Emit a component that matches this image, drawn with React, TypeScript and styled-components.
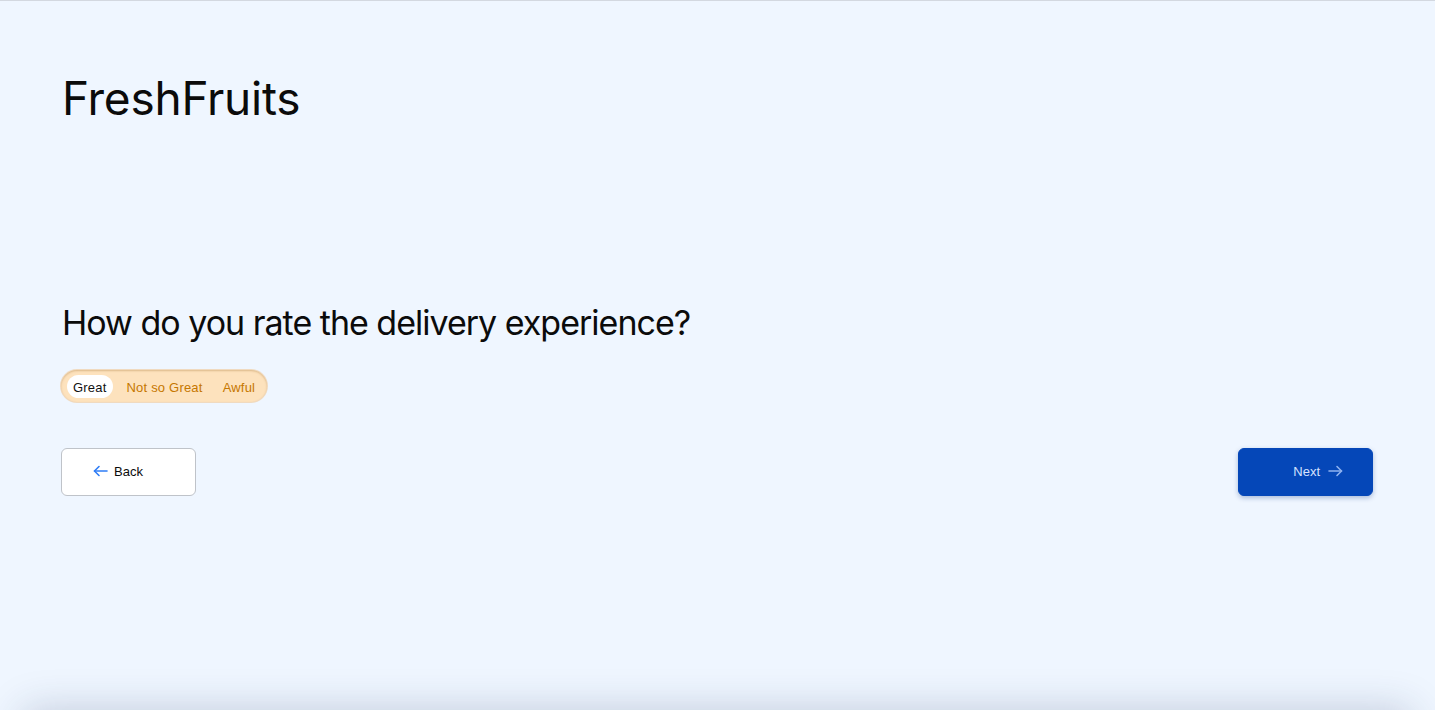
import React, { useState } from "react";
import styled, { createGlobalStyle } from "styled-components";

const Global = createGlobalStyle`
  html, body { margin: 0; padding: 0; background: #eff6ff; overflow: hidden; }
  * { box-sizing: border-box; }
`;

const Page = styled.div`
  min-height: 710px;
  border-top: 1px solid #d3d8e0;
  background: #eff6ff;
  padding: 0 62px;
  display: flex;
  flex-direction: column;
`;

const Brand = styled.h1`
  margin: 68px 0 0;
  font-family: Inter, "Noto Sans", sans-serif;
  font-weight: 400;
  font-size: 46px;
  line-height: 58px;
  letter-spacing: -0.25px;
  color: #0b0b0b;
`;

const Question = styled.h2`
  margin: 174px 0 0;
  font-family: Inter, "Noto Sans", sans-serif;
  font-weight: 400;
  font-size: 34px;
  line-height: 44px;
  letter-spacing: -1px;
  color: #0b0b0b;
`;

const Segmented = styled.div`
  margin: 25px 0 0 -1px;
  align-self: flex-start;
  display: flex;
  align-items: center;
  gap: 8px;
  height: 32px;
  padding: 1px 6px 0 6px;
  border-radius: 16px;
  background: #fde2bd;
  box-shadow: inset 0 1px 2px rgba(160, 110, 40, 0.35), 0 0 0 1px rgba(240, 200, 150, 0.6);
`;

const Segment = styled.button<{ $active?: boolean }>`
  border: 0;
  height: 23px;
  padding: 1px 6px 0;
  border-radius: 12px;
  font-family: "Liberation Sans", Arial, sans-serif;
  font-size: 13px;
  letter-spacing: 0.2px;
  background: ${(p) => (p.$active ? "#ffffff" : "transparent")};
  color: ${(p) => (p.$active ? "#111111" : "#c67700")};
  cursor: pointer;
`;

const Actions = styled.div`
  margin-top: 46px;
  display: flex;
  justify-content: space-between;
  margin-left: -1px;
`;

const Button = styled.button<{ $primary?: boolean }>`
  width: 135px;
  height: 48px;
  border-radius: 6px;
  display: flex;
  align-items: center;
  gap: ${(p) => (p.$primary ? "8px" : "6px")};
  justify-content: ${(p) => (p.$primary ? "flex-end" : "flex-start")};
  padding: ${(p) => (p.$primary ? "0 29px 2px 0" : "0 0 2px 31px")};
  font-family: "Liberation Sans", Arial, sans-serif;
  font-size: 13px;
  border: 1px solid ${(p) => (p.$primary ? "#0547b8" : "#bfc3c9")};
  background: ${(p) => (p.$primary ? "#0547b8" : "#ffffff")};
  color: ${(p) => (p.$primary ? "#d7e3ff" : "#0b0b0b")};
  box-shadow: ${(p) => (p.$primary ? "0 2px 5px rgba(5, 50, 130, 0.3)" : "none")};
  cursor: pointer;
`;

const Footer = styled.div`
  height: 60px;
  margin: 0 24px;
  background: #eff6ff;
  box-shadow: 0 0 40px rgba(30, 50, 90, 0.22);
`;

const Arrow = ({ dir, color }: { dir: "left" | "right"; color: string }) => (
  <svg width="15" height="12" viewBox="0 0 15 12" fill="none" stroke={color} strokeWidth="1.6" strokeLinecap="round" strokeLinejoin="round">
    {dir === "left" ? (
      <>
        <path d="M14 6H1.5" />
        <path d="M6 1.5L1.5 6L6 10.5" />
      </>
    ) : (
      <>
        <path d="M1 6h12.5" />
        <path d="M9 1.5L13.5 6L9 10.5" />
      </>
    )}
  </svg>
);

export default function App() {
  const [rating, setRating] = useState("Great");
  const options = ["Great", "Not so Great", "Awful"];
  return (
    <>
      <Global />
      <Page>
        <Brand>FreshFruits</Brand>
        <Question>How do you rate the delivery experience?</Question>
        <Segmented>
          {options.map((o) => (
            <Segment key={o} $active={rating === o} onClick={() => setRating(o)}>
              {o}
            </Segment>
          ))}
        </Segmented>
        <Actions>
          <Button>
            <Arrow dir="left" color="#2f7df6" />
            Back
          </Button>
          <Button $primary>
            Next
            <Arrow dir="right" color="#8fb2f0" />
          </Button>
        </Actions>
      </Page>
      <Footer />
    </>
  );
}
